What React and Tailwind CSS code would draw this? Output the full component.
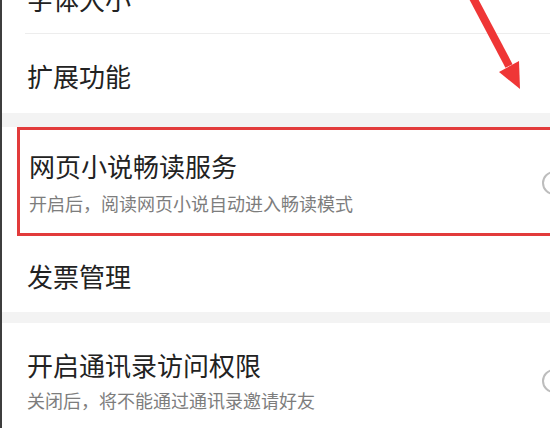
const font = { fontFamily: '"Noto Sans CJK SC", "Noto Sans", sans-serif' };

function Toggle() {
  return <div className="h-[24px] w-[44px] shrink-0 rounded-full border-2 border-[#bdbdbd] bg-white" />;
}

function Arrow() {
  return (
    <svg
      className="absolute left-[450px] top-0"
      width="90"
      height="100"
      viewBox="0 0 90 100"
    >
      <line x1="19" y1="-6" x2="57" y2="66" stroke="#ef3636" strokeWidth="8" />
      <polygon points="47,72 68,89 67,61" fill="#ef3636" />
    </svg>
  );
}

export default function App() {
  return (
    <div
      className="relative h-[428px] w-[550px] overflow-hidden border-l-2 border-[#3d3d3d] bg-white text-[#222]"
      style={font}
    >
      {/* cut-off row */}
      <div className="flex h-[33px] flex-col pl-[25px]">
        <div className="-mt-[14px] text-[26px] leading-[26px]">字体大小</div>
      </div>
      <div className="ml-[23px] border-b border-[#ededed]" />

      <div className="flex h-[79px] items-center pl-[25px] pt-[4px] text-[26px]">
        扩展功能
      </div>

      <div className="h-[14px] bg-[#f3f3f3]" />

      <div className="ml-[15px] w-[580px] border-[3px] border-[#e23b3b]">
        <div className="flex items-center pb-[19px] pl-[9px] pr-[8px] pt-[21px]">
          <div className="flex-1">
            <div className="text-[26px] leading-[30px]">网页小说畅读服务</div>
            <div className="mt-[11px] text-[18px] leading-[22px] text-[#7d7d7d]">
              开启后，阅读网页小说自动进入畅读模式
            </div>
          </div>
          <Toggle />
        </div>
      </div>

      <div className="flex h-[76px] items-center pl-[25px] pt-[2px] text-[26px]">
        发票管理
      </div>

      <div className="h-[11px] bg-[#f3f3f3]" />

      <div className="flex w-[600px] items-center pl-[25px] pt-[27px]">
        <div className="flex-1">
          <div className="text-[26px] leading-[30px]">开启通讯录访问权限</div>
          <div className="mt-[9px] text-[18px] leading-[22px] text-[#7d7d7d]">
            关闭后，将不能通过通讯录邀请好友
          </div>
        </div>
        <div className="mr-[16px]">
          <Toggle />
        </div>
      </div>

      <Arrow />
    </div>
  );
}
